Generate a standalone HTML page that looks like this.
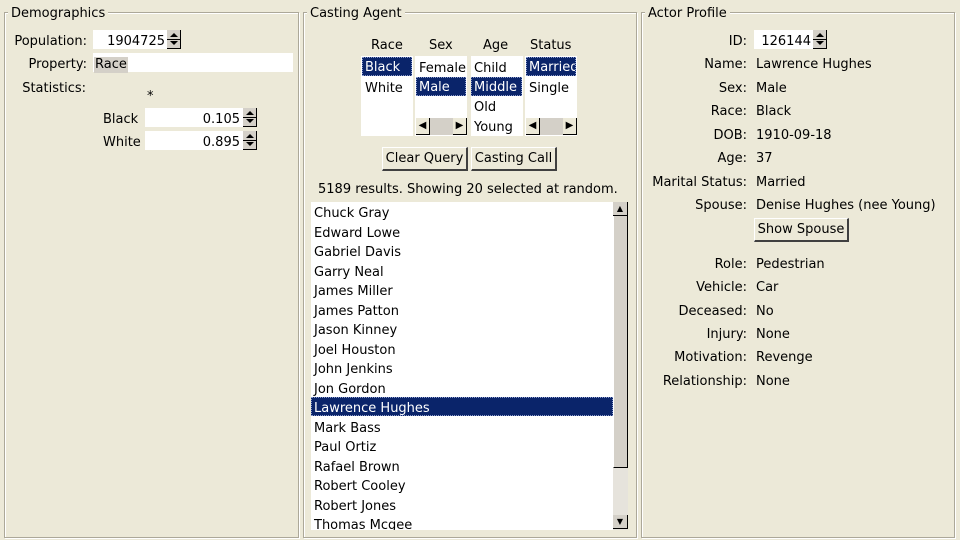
<!DOCTYPE html>
<html><head><meta charset="utf-8"><style>
*{box-sizing:border-box;margin:0;padding:0}
body{width:960px;height:540px;background:#ece9d8;font-family:"DejaVu Sans","Liberation Sans",sans-serif;font-size:13px;color:#000;position:relative;overflow:hidden}
.a{position:absolute;white-space:nowrap;line-height:16px;margin-top:2px}
.fr{position:absolute;border:1px solid #aca899;box-shadow:inset 1px 1px 0 #fff,1px 1px 0 #fff}
.lg{position:absolute;background:#ece9d8;padding:0 3px;line-height:16px;top:6px}
.w{position:absolute;background:#fff}
.sel{position:absolute;background:#0a246a;color:#fff;border:1px dotted #8a9acc;margin-top:0}
.spin{position:absolute;width:14px;background:#d4d0c8;border-right:1px solid #000;border-bottom:1px solid #000}
.spin:before{content:"";position:absolute;left:3px;top:3px;border:4px solid transparent;border-bottom:4px solid #000;border-top:0}
.spin:after{content:"";position:absolute;left:3px;bottom:3px;border:4px solid transparent;border-top:4px solid #000;border-bottom:0}
.spin i{position:absolute;left:0;right:0;top:50%;height:1px;background:#000}
.btn{position:absolute;background:#ece9d8;border:1px solid #fff;border-right:2px solid #404040;border-bottom:2px solid #404040;text-align:center;line-height:21px}
.hs{position:absolute;height:17px;background:#d4d0c8}
.hs b{position:absolute;top:0;width:14px;height:17px;background:#ece9d8;border-right:1px solid #000;border-bottom:1px solid #000;font-size:10px;text-align:center;line-height:16px}
.r{text-align:right}
.pr{padding-right:2px}
</style></head><body>

<div class="fr" style="left:4px;top:12px;width:295px;height:526px"></div>
<div class="lg" style="left:8px">Demographics</div>
<div class="fr" style="left:303px;top:12px;width:334px;height:526px"></div>
<div class="lg" style="left:307px">Casting Agent</div>
<div class="fr" style="left:641px;top:12px;width:314px;height:526px"></div>
<div class="lg" style="left:645px">Actor Profile</div>

<!-- Demographics -->
<div class="a r" style="left:0;width:87px;top:32px">Population:</div>
<div class="w" style="left:93px;top:30px;width:75px;height:19px"></div>
<div class="a r pr" style="left:93px;width:74px;top:32px">1904725</div>
<div class="spin" style="left:167px;top:30px;height:19px"><i></i></div>
<div class="a r" style="left:0;width:87px;top:55px">Property:</div>
<div class="w" style="left:93px;top:53px;width:200px;height:19px"></div>
<div class="a" style="left:94px;top:55px;background:#d4d0c8;padding:0 1px">Race</div>
<div class="a r" style="left:0;width:86px;top:79px">Statistics:</div>
<div class="a" style="left:147px;top:87px">*</div>
<div class="a" style="left:103px;top:110px">Black</div>
<div class="w" style="left:145px;top:108px;width:98px;height:19px"></div>
<div class="a r pr" style="left:145px;width:97px;top:110px">0.105</div>
<div class="spin" style="left:243px;top:108px;height:19px"><i></i></div>
<div class="a" style="left:103px;top:133px">White</div>
<div class="w" style="left:145px;top:131px;width:98px;height:19px"></div>
<div class="a r pr" style="left:145px;width:97px;top:133px">0.895</div>
<div class="spin" style="left:243px;top:131px;height:19px"><i></i></div>

<!-- Casting Agent -->
<div class="a" style="left:371px;top:36px">Race</div>
<div class="a" style="left:429px;top:36px">Sex</div>
<div class="a" style="left:483px;top:36px">Age</div>
<div class="a" style="left:530px;top:36px">Status</div>

<div class="w" style="left:361px;top:56px;width:52px;height:80px"></div>
<div class="sel a" style="left:362px;top:57px;width:50px;height:19px;padding-left:2px;line-height:19px">Black</div>
<div class="a" style="left:365px;top:79px">White</div>

<div class="w" style="left:415px;top:56px;width:52px;height:80px;overflow:hidden"><div class="a" style="left:4px;top:3px">Female</div></div>
<div class="sel a" style="left:416px;top:77px;width:50px;height:19px;padding-left:2px;line-height:19px">Male</div>
<div class="hs" style="left:416px;top:118px;width:51px"><b style="left:0">&#9664;</b><b style="right:0">&#9654;</b></div>

<div class="w" style="left:471px;top:56px;width:52px;height:80px"></div>
<div class="a" style="left:474px;top:59px">Child</div>
<div class="sel a" style="left:471px;top:77px;width:51px;height:19px;padding-left:2px;line-height:19px">Middle</div>
<div class="a" style="left:474px;top:98px">Old</div>
<div class="a" style="left:474px;top:118px">Young</div>

<div class="w" style="left:525px;top:56px;width:52px;height:80px"></div>
<div class="sel a" style="left:526px;top:57px;width:50px;height:19px;padding-left:2px;line-height:19px;overflow:hidden">Married</div>
<div class="a" style="left:529px;top:79px">Single</div>
<div class="hs" style="left:526px;top:118px;width:51px"><b style="left:0">&#9664;</b><b style="right:0">&#9654;</b></div>

<div class="btn" style="left:382px;top:147px;width:86px;height:24px">Clear Query</div>
<div class="btn" style="left:471px;top:147px;width:86px;height:24px">Casting Call</div>
<div class="a" style="left:318px;top:180px">5189 results. Showing 20 selected at random.</div>

<div class="w" style="left:311px;top:202px;width:302px;height:328px;overflow:hidden">
<div style="position:absolute;left:0;top:195px;width:302px;height:19px;background:#0a246a;border:1px dotted #8a9acc"></div>
<div style="position:absolute;left:3px;top:2px;line-height:19.5px">
Chuck Gray<br>Edward Lowe<br>Gabriel Davis<br>Garry Neal<br>James Miller<br>James Patton<br>Jason Kinney<br>Joel Houston<br>John Jenkins<br>Jon Gordon<br><span style="color:#fff">Lawrence Hughes</span><br>Mark Bass<br>Paul Ortiz<br>Rafael Brown<br>Robert Cooley<br>Robert Jones<br>Thomas Mcgee</div></div>
<div style="position:absolute;left:613px;top:202px;width:15px;height:328px;background:#e6e3dc"></div>
<div style="position:absolute;left:613px;top:202px;width:15px;height:14px;background:#d4d0c8;border-right:1px solid #000;border-bottom:1px solid #000;font-size:8px;text-align:center;line-height:13px">&#9650;</div>
<div style="position:absolute;left:613px;top:216px;width:15px;height:252px;background:#d4d0c8;border-right:1px solid #000;border-bottom:1px solid #000;border-left:1px solid #fff"></div>
<div style="position:absolute;left:613px;top:515px;width:15px;height:14px;background:#d4d0c8;border-right:1px solid #000;border-bottom:1px solid #000;font-size:8px;text-align:center;line-height:13px">&#9660;</div>

<!-- Actor Profile -->
<div class="a r" style="left:640px;width:107px;top:32px">ID:</div>
<div class="w" style="left:754px;top:30px;width:60px;height:19px"></div>
<div class="a r pr" style="left:754px;width:59px;top:32px">126144</div>
<div class="spin" style="left:813px;top:30px;height:19px"><i></i></div>
<div class="a r" style="left:640px;width:107px;top:55px">Name:</div><div class="a" style="left:756px;top:55px">Lawrence Hughes</div>
<div class="a r" style="left:640px;width:107px;top:79px">Sex:</div><div class="a" style="left:756px;top:79px">Male</div>
<div class="a r" style="left:640px;width:107px;top:102px">Race:</div><div class="a" style="left:756px;top:102px">Black</div>
<div class="a r" style="left:640px;width:107px;top:126px">DOB:</div><div class="a" style="left:756px;top:126px">1910-09-18</div>
<div class="a r" style="left:640px;width:107px;top:149px">Age:</div><div class="a" style="left:756px;top:149px">37</div>
<div class="a r" style="left:640px;width:107px;top:173px">Marital Status:</div><div class="a" style="left:756px;top:173px">Married</div>
<div class="a r" style="left:640px;width:107px;top:196px">Spouse:</div><div class="a" style="left:756px;top:196px">Denise Hughes (nee Young)</div>
<div class="btn" style="left:754px;top:218px;width:95px;height:24px">Show Spouse</div>
<div class="a r" style="left:640px;width:107px;top:255px">Role:</div><div class="a" style="left:756px;top:255px">Pedestrian</div>
<div class="a r" style="left:640px;width:107px;top:278px">Vehicle:</div><div class="a" style="left:756px;top:278px">Car</div>
<div class="a r" style="left:640px;width:107px;top:302px">Deceased:</div><div class="a" style="left:756px;top:302px">No</div>
<div class="a r" style="left:640px;width:107px;top:325px">Injury:</div><div class="a" style="left:756px;top:325px">None</div>
<div class="a r" style="left:640px;width:107px;top:348px">Motivation:</div><div class="a" style="left:756px;top:348px">Revenge</div>
<div class="a r" style="left:640px;width:107px;top:372px">Relationship:</div><div class="a" style="left:756px;top:372px">None</div>
</body></html>
